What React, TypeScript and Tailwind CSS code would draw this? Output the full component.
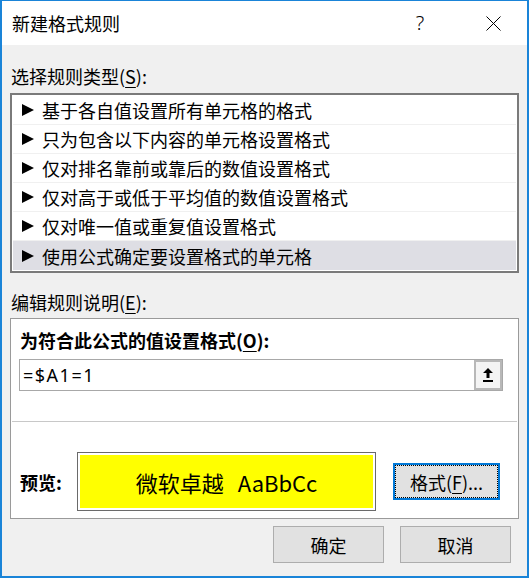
import { ReactNode } from 'react'

const RULES = [
  '基于各自值设置所有单元格的格式',
  '只为包含以下内容的单元格设置格式',
  '仅对排名靠前或靠后的数值设置格式',
  '仅对高于或低于平均值的数值设置格式',
  '仅对唯一值或重复值设置格式',
  '使用公式确定要设置格式的单元格',
]

const SELECTED = 5

function Key({ children }: { children: ReactNode }) {
  return <span className="underline underline-offset-[3px]">{children}</span>
}

function Triangle() {
  return (
    <svg width="12" height="12" viewBox="0 0 12 12" className="shrink-0">
      <polygon points="0,0 12,6 0,12" fill="#000" />
    </svg>
  )
}

export default function App() {
  return (
    <div
      className="w-[529px] h-[578px] flex flex-col border-t border-x-2 border-b-2 border-[#1a84d8] bg-[#f0f0f0] text-black text-[18px] leading-[24px]"
      style={{ fontFamily: '"Noto Sans CJK SC", "Noto Sans", sans-serif' }}
    >
      {/* title bar */}
      <div className="h-[44px] bg-white flex items-center pl-[10px] pr-[11px]">
        <span className="flex-1">新建格式规则</span>
        <div className="flex items-center gap-[24px]">
          <span className="w-[46px] pr-[6px] text-center text-[20px] font-light" style={{ fontFamily: '"Noto Sans", sans-serif' }}>?</span>
          <span className="w-[46px] flex justify-center">
            <svg width="15" height="15" viewBox="0 0 15 15">
              <path d="M0.5 0.5 L14.5 14.5 M14.5 0.5 L0.5 14.5" stroke="#000" strokeWidth="1" />
            </svg>
          </span>
        </div>
      </div>

      <div className="flex-1 flex flex-col px-[8px] pt-[19px]">
        <div className="ml-[1px]">选择规则类型(<Key>S</Key>):</div>

        <div className="mt-[5px] h-[180px] border-2 border-[#7a7a7a] bg-white p-[1px]">
          {RULES.map((r, i) => (
            <div
              key={r}
              className={`h-[29px] flex items-center pl-[9px] gap-[8px] ${i === SELECTED ? 'bg-[#dedee4] h-[28px]' : 'border-b border-[#f0f0f0]'}`}
            >
              <Triangle />
              <span className="leading-[28px]">{r}</span>
            </div>
          ))}
        </div>

        <div className="mt-[17px] ml-[1px]">编辑规则说明(<Key>E</Key>):</div>

        <div className="mt-[4px] border border-[#9a9a9a] bg-white flex flex-col">
          <div className="pt-[9px] pl-[9px] font-bold">
            为符合此公式的值设置格式(<Key>O</Key>):
          </div>
          <div className="mt-[7px] ml-[8px] w-[484px] h-[32px] border border-[#a8a8a8] flex">
            <div className="flex-1 pl-[3px] flex items-center text-[18px] tracking-[1.5px]" style={{ fontFamily: '"Noto Sans", sans-serif' }}>
              =$A1=1
            </div>
            <div className="w-[28px] border-2 border-[#b8b8b8] bg-[#f4f4f4] flex items-center justify-center">
              <svg width="10" height="14" viewBox="0 0 10 14">
                <path d="M5 0 L10 5 L6.5 5 L6.5 10 L3.5 10 L3.5 5 L0 5 Z" fill="#000" />
                <rect x="0" y="12" width="10" height="2" fill="#000" />
              </svg>
            </div>
          </div>

          <div className="mt-[30px] mx-[1px] h-[1px] bg-[#c8c8c8]" />

          <div className="mt-[30px] mb-[7px] flex items-center pl-[9px]">
            <div className="w-[57px] font-bold">预览:</div>
            <div className="w-[299px] h-[59px] border border-[#6a6a6a] p-[2px] bg-white">
              <div className="w-full h-full bg-[#ffff00] flex items-center justify-center text-[22px] gap-[14px]">
                <span>微软卓越</span>
                <span>AaBbCc</span>
              </div>
            </div>
            <button className="ml-[17px] w-[107px] h-[37px] border-2 border-[#0078d7] bg-[#e1e1e1]">
              <div className="w-full h-full border border-dotted border-black flex items-center justify-center">
                格式(<Key>F</Key>)...
              </div>
            </button>
          </div>
        </div>

        <div className="mt-[7px] flex justify-end gap-[16px] mr-[8px]">
          <button className="w-[111px] h-[37px] border border-[#adadad] bg-[#e1e1e1]">确定</button>
          <button className="w-[111px] h-[37px] border border-[#adadad] bg-[#e1e1e1]">取消</button>
        </div>
      </div>
    </div>
  )
}
